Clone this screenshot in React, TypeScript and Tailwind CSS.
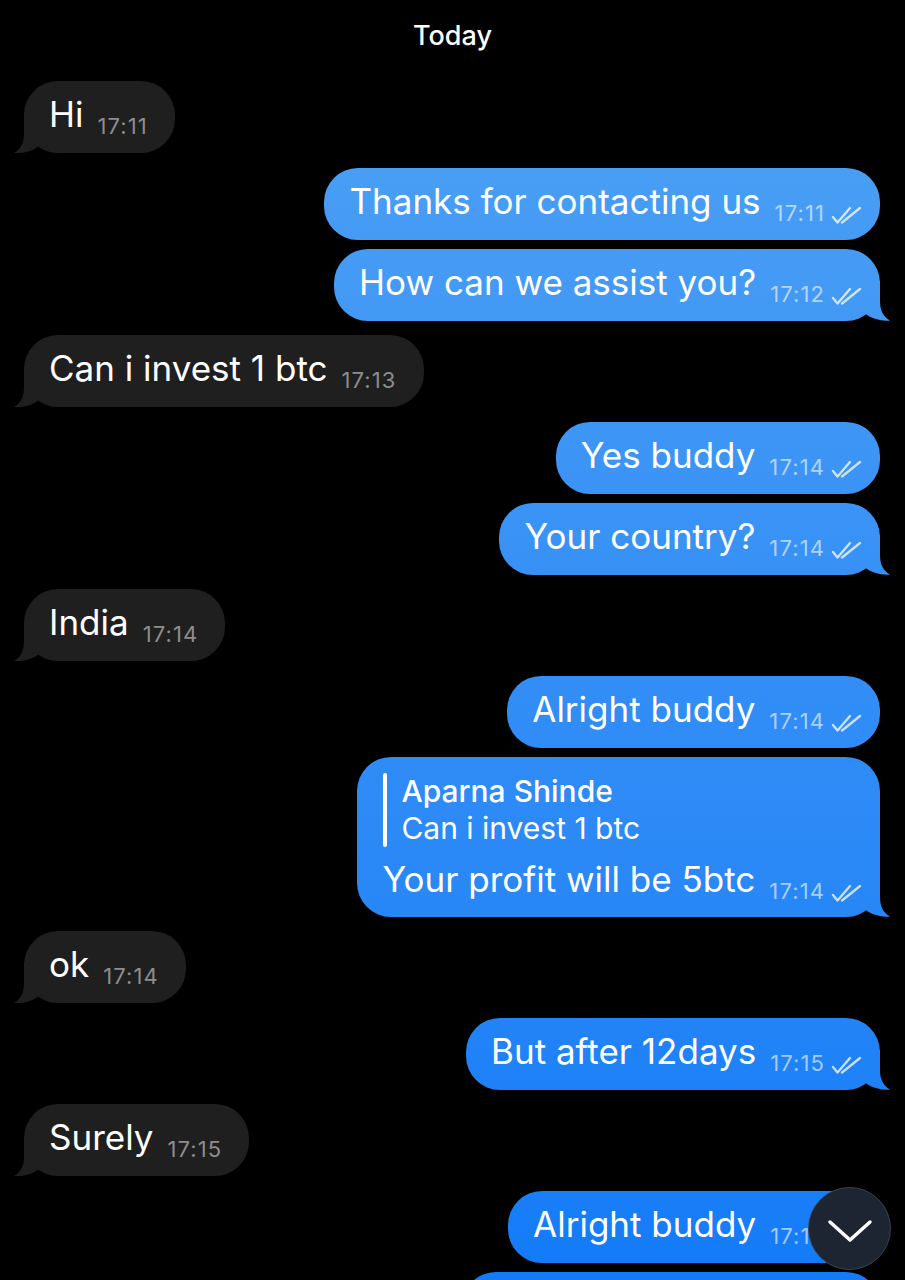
import { FC } from "react";
import clsx, { ClassValue } from "clsx";
import { twMerge } from "tailwind-merge";

const cn = (...inputs: ClassValue[]) => twMerge(clsx(inputs));

type Reply = { name: string; text: string };

type Message = {
  out: boolean;
  text: string;
  time: string;
  tail?: boolean;
  tight?: boolean;
  reply?: Reply;
  ghost?: boolean;
};

const messages: Message[] = [
  { out: false, text: "Hi", time: "17:11", tail: true },
  { out: true, text: "Thanks for contacting us", time: "17:11" },
  { out: true, text: "How can we assist you?", time: "17:12", tail: true, tight: true },
  { out: false, text: "Can i invest 1 btc", time: "17:13", tail: true },
  { out: true, text: "Yes buddy", time: "17:14" },
  { out: true, text: "Your country?", time: "17:14", tail: true, tight: true },
  { out: false, text: "India", time: "17:14", tail: true },
  { out: true, text: "Alright buddy", time: "17:14" },
  {
    out: true,
    text: "Your profit will be 5btc",
    time: "17:14",
    tail: true,
    tight: true,
    reply: { name: "Aparna Shinde", text: "Can i invest 1 btc" },
  },
  { out: false, text: "ok", time: "17:14", tail: true },
  { out: true, text: "But after 12days", time: "17:15", tail: true },
  { out: false, text: "Surely", time: "17:15", tail: true },
  { out: true, text: "Alright buddy", time: "17:15" },
  { out: true, text: "", time: "", tight: true, ghost: true },
];

const Checks: FC = () => (
  <svg
    className="ml-[5px] h-[18px] w-[32px] shrink-0 text-white/75"
    viewBox="0 0 32 18"
    fill="none"
    stroke="currentColor"
    strokeWidth={2.3}
    strokeLinecap="round"
    strokeLinejoin="round"
  >
    <path d="M3 11 L7.5 16.5 L20 2" />
    <path d="M12 16.5 L30 2" />
  </svg>
);

const Tail: FC<{ out: boolean }> = ({ out }) =>
  out ? (
    <div className="absolute -right-[10px] bottom-0 h-[40px] w-[30px] bg-linear-to-b from-[#4fa2f3] to-[#137bf8] bg-fixed [clip-path:path('M20_0L20_20C20_30_23_36_30_40C22_41_11_38_5_33L0_28L0_0Z')]" />
  ) : (
    <div className="absolute -left-[10px] bottom-0 h-[40px] w-[30px] bg-[#1f1f1f] [clip-path:path('M10_0L10_20C10_30_7_36_0_40C8_41_19_38_25_33L30_28L30_0Z')]" />
  );

const Bubble: FC<{ msg: Message; first: boolean }> = ({ msg, first }) => {
  const { out, text, time, tail, tight, reply, ghost } = msg;

  return (
    <div
      className={cn(
        "flex",
        out ? "justify-end" : "justify-start",
        first ? "mt-[27px]" : tight ? "mt-[9px]" : "mt-[14.5px]",
      )}
    >
      <div
        className={cn(
          "relative rounded-[34px] pl-[25px]",
          out
            ? "bg-linear-to-b from-[#4fa2f3] to-[#137bf8] bg-fixed pr-[18px]"
            : "bg-[#1f1f1f] pr-[27px]",
          ghost && "h-[72px] w-[418px]",
        )}
      >
        {tail && <Tail out={out} />}

        {reply && (
          <div className="relative mt-[16px] flex pl-px">
            <div className="w-[4px] rounded-full bg-white" />
            <div className="pl-[14px] text-[30px] leading-[37px]">
              <div className="font-medium">{reply.name}</div>
              <div>{reply.text}</div>
            </div>
          </div>
        )}

        {!ghost && (
          <div
            className={cn(
              "relative flex items-baseline whitespace-nowrap pb-[5px] text-[35px]",
              reply ? "leading-[65px]" : "leading-[67px]",
            )}
          >
            <span>{text}</span>
            <span
              className={cn(
                "relative top-[7px] ml-[14px] flex items-end text-[22px] leading-none tracking-[0.05em]",
                out ? "text-white/60" : "text-[#8d8d8d]",
              )}
            >
              {time}
              {out && <Checks />}
            </span>
          </div>
        )}
      </div>
    </div>
  );
};

const App: FC = () => {
  return (
    <div className="relative h-[1280px] w-[905px] overflow-hidden bg-black font-[Inter,sans-serif] text-white">
      <div className="pt-[18px] text-center text-[27px] leading-[36px] font-medium">
        Today
      </div>

      <div className="flex flex-col pr-[25px] pl-[24px]">
        {messages.map((msg, i) => (
          <Bubble key={i} msg={msg} first={i === 0} />
        ))}
      </div>

      <button className="absolute top-[1187px] left-[808px] flex size-[83px] items-center justify-center rounded-full border-[1.5px] border-[#3a4350] bg-[#1c2531]">
        <svg
          className="mt-[4px] h-[24px] w-[46px]"
          viewBox="0 0 46 24"
          fill="none"
          stroke="white"
          strokeWidth={3.5}
          strokeLinecap="round"
          strokeLinejoin="round"
        >
          <path d="M3 3 L23 21 L43 3" />
        </svg>
      </button>
    </div>
  );
};

export default App;
